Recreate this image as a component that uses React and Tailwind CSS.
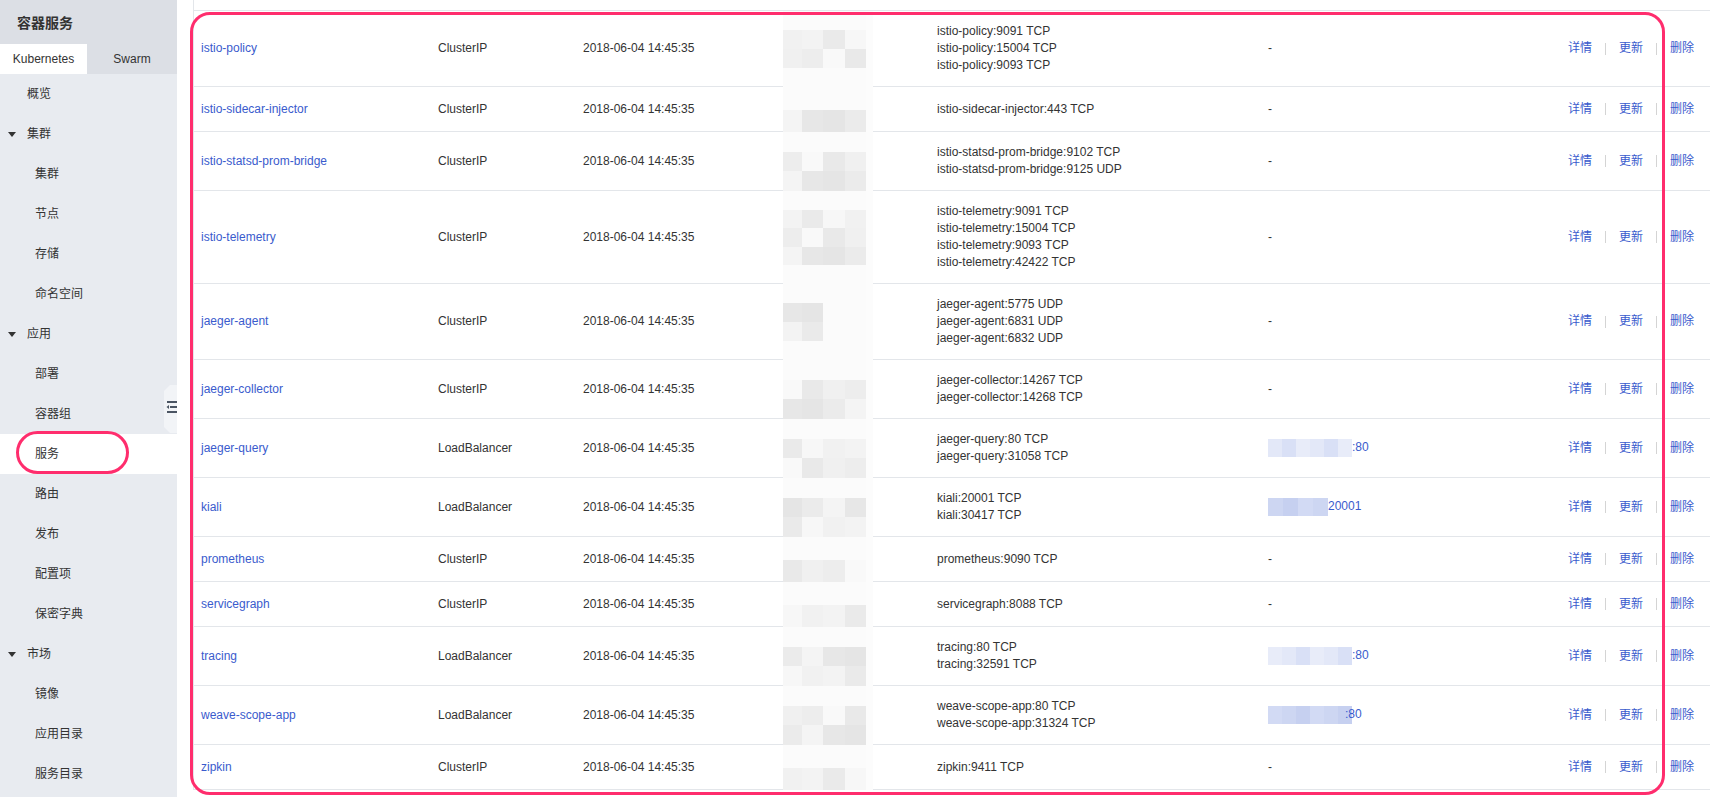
import React from 'react';

const FONT = { fontFamily: '"Liberation Sans", "Noto Sans CJK SC", Arial, sans-serif' };

const services = [
  { name: 'istio-policy', type: 'ClusterIP', ports: ['istio-policy:9091 TCP', 'istio-policy:15004 TCP', 'istio-policy:9093 TCP'] },
  { name: 'istio-sidecar-injector', type: 'ClusterIP', ports: ['istio-sidecar-injector:443 TCP'] },
  { name: 'istio-statsd-prom-bridge', type: 'ClusterIP', ports: ['istio-statsd-prom-bridge:9102 TCP', 'istio-statsd-prom-bridge:9125 UDP'] },
  { name: 'istio-telemetry', type: 'ClusterIP', ports: ['istio-telemetry:9091 TCP', 'istio-telemetry:15004 TCP', 'istio-telemetry:9093 TCP', 'istio-telemetry:42422 TCP'] },
  { name: 'jaeger-agent', type: 'ClusterIP', ports: ['jaeger-agent:5775 UDP', 'jaeger-agent:6831 UDP', 'jaeger-agent:6832 UDP'], narrow: true },
  { name: 'jaeger-collector', type: 'ClusterIP', ports: ['jaeger-collector:14267 TCP', 'jaeger-collector:14268 TCP'] },
  { name: 'jaeger-query', type: 'LoadBalancer', ports: ['jaeger-query:80 TCP', 'jaeger-query:31058 TCP'], ext: ':80' },
  { name: 'kiali', type: 'LoadBalancer', ports: ['kiali:20001 TCP', 'kiali:30417 TCP'], ext: '20001', extShort: true },
  { name: 'prometheus', type: 'ClusterIP', ports: ['prometheus:9090 TCP'] },
  { name: 'servicegraph', type: 'ClusterIP', ports: ['servicegraph:8088 TCP'] },
  { name: 'tracing', type: 'LoadBalancer', ports: ['tracing:80 TCP', 'tracing:32591 TCP'], ext: ':80' },
  { name: 'weave-scope-app', type: 'LoadBalancer', ports: ['weave-scope-app:80 TCP', 'weave-scope-app:31324 TCP'], ext: ':80', overlap: true },
  { name: 'zipkin', type: 'ClusterIP', ports: ['zipkin:9411 TCP'] },
];

const nav = [
  { label: '概览', level: 0 },
  { label: '集群', group: true },
  { label: '集群' },
  { label: '节点' },
  { label: '存储' },
  { label: '命名空间' },
  { label: '应用', group: true },
  { label: '部署' },
  { label: '容器组' },
  { label: '服务', active: true },
  { label: '路由' },
  { label: '发布' },
  { label: '配置项' },
  { label: '保密字典' },
  { label: '市场', group: true },
  { label: '镜像' },
  { label: '应用目录' },
  { label: '服务目录' },
];

// soft greys for the blurred IP column
const greys = [0xf4, 0xea, 0xf0, 0xe7, 0xf7, 0xed, 0xe5, 0xf1, 0xf9, 0xeb, 0xf3, 0xe9];
const blues = ['#e3e8f8', '#cdd6f2', '#d9e0f6', '#c6d0f0', '#e8ecf9', '#d2daf4'];

const Mosaic = ({ seed, rows, narrow }) => {
  const widths = [19, 21, 22, 21];
  return (
    <div className="absolute left-[7px] top-0 bottom-[-1px] flex flex-col bg-white">
      {Array.from({ length: rows }).map((_, r) => (
        <div key={r} className="flex flex-1">
          {widths.map((w, c) => {
            const blank = r === 0 || (r === rows - 1 && rows > 3) || (narrow && c > 1);
            const v = blank ? 0xfb : greys[(seed * 5 + r * 7 + c * 3) % greys.length];
            return <div key={c} style={{ width: w, backgroundColor: `rgb(${v},${v},${v})` }} />;
          })}
          <div className="w-[7px] bg-[#fcfcfc]" />
        </div>
      ))}
    </div>
  );
};

const ExtBlur = ({ short, seed }) => (
  <span className={`inline-flex h-[18px] align-middle ${short ? 'w-[60px]' : 'w-[84px]'}`}>
    {(short ? [0, 1, 2, 3] : [0, 1, 2, 3, 4, 5]).map((i) => (
      <span key={i} className="flex-1" style={{ backgroundColor: blues[(i * 2 + seed) % blues.length] }} />
    ))}
  </span>
);

const Triangle = () => (
  <svg width="8" height="5" viewBox="0 0 8 5" className="shrink-0">
    <path d="M0 0h8L4 5z" fill="#333" />
  </svg>
);

const Sidebar = () => (
  <aside className="relative w-[177px] shrink-0 h-full bg-[#e8ebf0] text-[#333]">
    <div className="h-[44px] bg-[#dcdfe5] pl-[17px] pt-[2px] flex items-center text-[14px] font-bold">容器服务</div>
    <div className="flex h-[30px] text-[12px]">
      <div className="w-[87px] bg-white flex items-center justify-center">Kubernetes</div>
      <div className="flex-1 bg-[#dcdfe5] flex items-center justify-center">Swarm</div>
    </div>
    {nav.map((item, i) => (
      <div
        key={i}
        className={`h-[40px] flex items-center text-[12px] ${item.active ? 'bg-white' : ''} ${
          item.group ? 'pl-[8px] gap-[11px]' : item.level === 0 ? 'pl-[27px]' : 'pl-[35px]'
        }`}
      >
        {item.group && <Triangle />}
        {item.label}
      </div>
    ))}
    <svg className="absolute left-[164px] top-[385px]" width="13" height="48" viewBox="0 0 13 48">
      <path d="M6 0H13V48H6L0 42V6Z" fill="#f2f4f7" />
      <rect x="3" y="16" width="10" height="2" fill="#4b5563" />
      <rect x="6" y="21" width="7" height="2" fill="#4b5563" />
      <path d="M2.5 22L5 20V24Z" fill="#4b5563" />
      <rect x="3" y="26" width="10" height="2" fill="#4b5563" />
    </svg>
  </aside>
);

const Row = ({ s, idx }) => {
  const td = 'h-[45px] px-[7px] py-[12px] border-b border-[#e3e6ea] align-middle';
  return (
    <tr>
      <td className={`${td} text-[#3a5bcd]`}>{s.name}</td>
      <td className={td}>{s.type}</td>
      <td className={td}>2018-06-04 14:45:35</td>
      <td className={`${td} relative`}>
        <Mosaic seed={idx} rows={s.ports.length + 1} narrow={s.narrow} />
      </td>
      <td className={td}>
        {s.ports.map((p) => (
          <div key={p}>{p}</div>
        ))}
      </td>
      <td className={td}>
        {s.ext ? (
          <span className="text-[#3a5bcd] whitespace-nowrap">
            <ExtBlur short={s.extShort} seed={idx} />
            <span className={s.overlap ? 'relative -ml-[7px] -z-0' : ''}>{s.ext}</span>
          </span>
        ) : (
          '-'
        )}
      </td>
      <td className={`${td} pr-[16px] text-right text-[#3a5bcd] whitespace-nowrap`}>
        <span>详情</span>
        <span className="inline-block w-px h-[12px] bg-[#d4d4d4] mx-[13px] align-middle" />
        <span>更新</span>
        <span className="inline-block w-px h-[12px] bg-[#d4d4d4] mx-[13px] align-middle" />
        <span>删除</span>
      </td>
    </tr>
  );
};

export default function App() {
  return (
    <div className="relative flex w-[1710px] h-[797px] overflow-hidden bg-white" style={FONT}>
      <Sidebar />
      <div className="flex-1 pl-[16px]">
        <div className="h-[790px] border-l border-[#e3e6ea]">
          <div className="h-[11px] border-b border-[#e3e6ea]" />
          <table className="w-full table-fixed border-collapse text-[12px] leading-[17px] text-[#333]">
            <colgroup>
              <col className="w-[237px]" />
              <col className="w-[145px]" />
              <col className="w-[200px]" />
              <col className="w-[154px]" />
              <col className="w-[331px]" />
              <col className="w-[200px]" />
              <col />
            </colgroup>
            <tbody>
              {services.map((s, i) => (
                <Row key={s.name} s={s} idx={i} />
              ))}
            </tbody>
          </table>
        </div>
      </div>
      <div className="absolute left-[190px] top-[12px] w-[1475px] h-[783px] border-[3px] border-[#ff2d6d] rounded-[20px] pointer-events-none" />
      <div className="absolute left-[16px] top-[431px] w-[113px] h-[43px] border-[3px] border-[#ff2d6d] rounded-full pointer-events-none" />
    </div>
  );
}
